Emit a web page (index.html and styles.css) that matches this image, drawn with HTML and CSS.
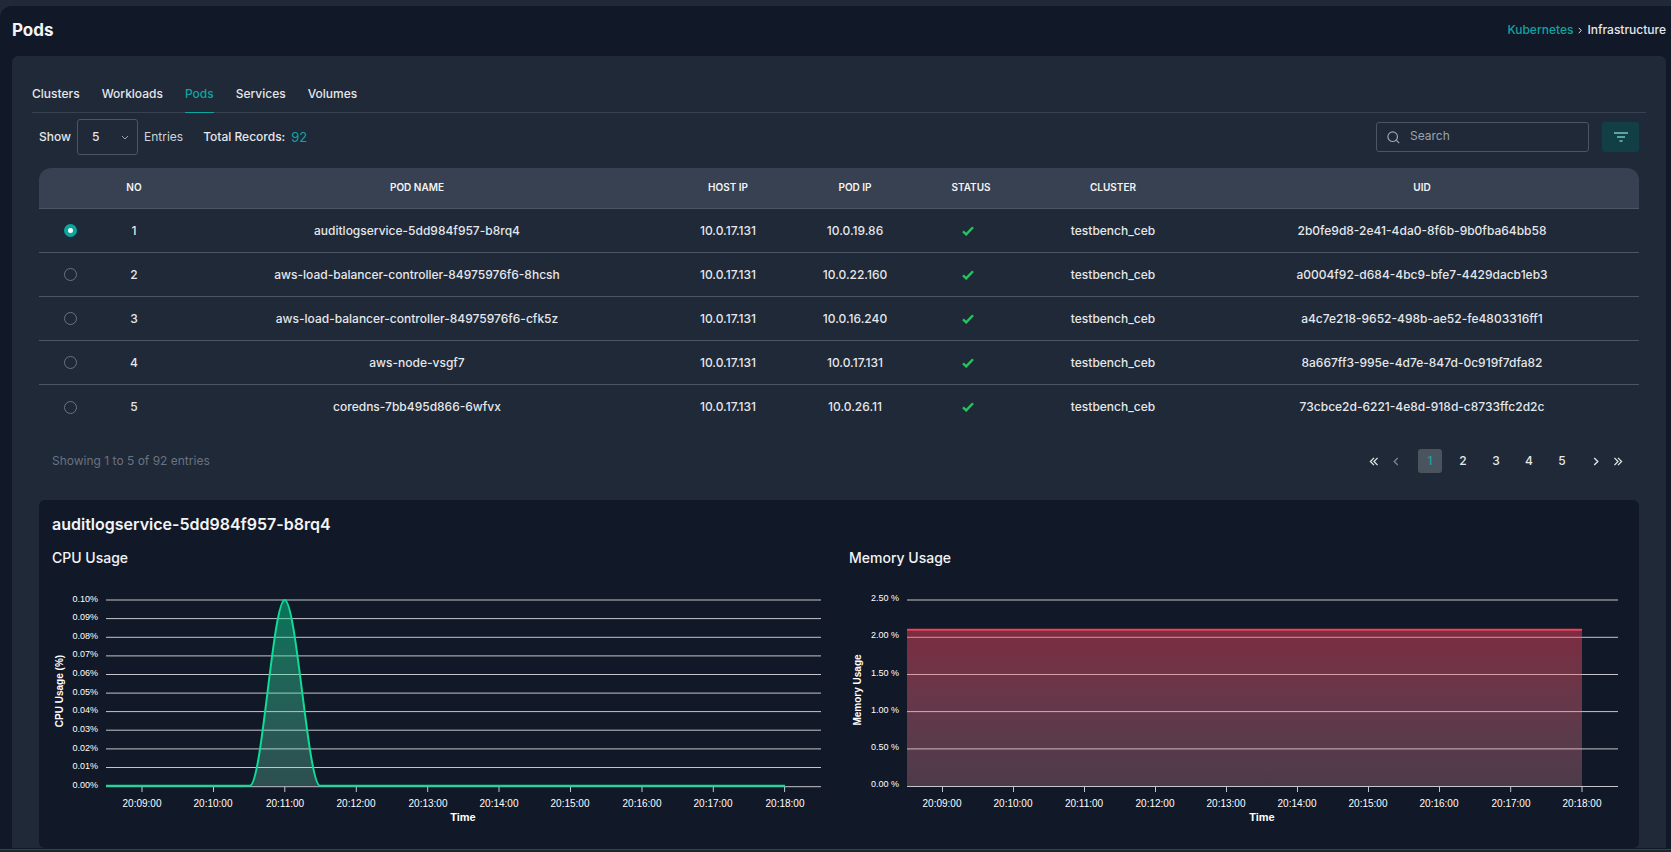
FILE: index.html
```html
<!DOCTYPE html>
<html lang="en">
<head>
    <meta charset="UTF-8">
    <meta name="viewport" content="width=device-width, initial-scale=1.0">
    <title>Pods</title>
    <link rel="stylesheet" href="styles.css">
</head>
<body>
<!-- shared icon shapes -->
<svg class="sprite" aria-hidden="true">
    <symbol id="check" viewBox="0 0 12 10"><path d="M1 5.4l3.2 3L11 1.2" fill="none" stroke="#22c55e" stroke-width="2.4"/></symbol>
    <symbol id="chevron" viewBox="0 0 6 10"><path d="M1 1l4 4-4 4" fill="none" stroke="currentColor" stroke-width="1.5"/></symbol>
    <symbol id="chevrons" viewBox="0 0 10 10"><path d="M1 1l4 4-4 4M5 1l4 4-4 4" fill="none" stroke="currentColor" stroke-width="1.4"/></symbol>
</svg>

<main class="page">
    <header class="page-header">
        <h1>Pods</h1>
        <nav class="breadcrumb" aria-label="Breadcrumb">
            <a href="#">Kubernetes</a>
            <svg width="4" height="7" viewBox="0 0 6 10"><use href="#chevron"/></svg>
            <span>Infrastructure</span>
        </nav>
    </header>

    <section class="panel">
        <nav class="tabs">
            <a href="#">Clusters</a>
            <a href="#">Workloads</a>
            <a href="#" class="active">Pods</a>
            <a href="#">Services</a>
            <a href="#">Volumes</a>
        </nav>

        <div class="panel-body">
            <div class="toolbar">
                <label for="page-size">Show</label>
                <div class="select-box">
                    <select id="page-size">
                        <option>5</option>
                        <option>10</option>
                        <option>25</option>
                    </select>
                    <svg width="8" height="5" viewBox="0 0 8 5"><path d="M1 1l3 3 3-3" fill="none" stroke="#9ca3af"/></svg>
                </div>
                <span class="entries">Entries</span>
                <span class="total">Total Records:</span>
                <span class="total-count">92</span>
                <div class="search">
                    <svg width="13" height="13" viewBox="0 0 13 13" fill="none" stroke="#9ca3af" stroke-width="1.2"><circle cx="5.7" cy="5.7" r="4.8"/><path d="M9.2 9.2l3 3"/></svg>
                    <input type="text" placeholder="Search" aria-label="Search">
                </div>
                <button class="filter-btn" aria-label="Filter">
                    <svg width="14" height="10" viewBox="0 0 14 10" stroke="#72c7c2" stroke-width="1.6"><path d="M0 1h14M3 5h8M5.5 9h3"/></svg>
                </button>
            </div>

            <table class="pods-table">
                <colgroup>
                    <col class="col-radio"><col class="col-no"><col class="col-name"><col class="col-host">
                    <col class="col-ip"><col class="col-status"><col class="col-cluster"><col class="col-uid">
                </colgroup>
                <thead>
                    <tr><th></th><th>NO</th><th>POD NAME</th><th>HOST IP</th><th>POD IP</th><th>STATUS</th><th>CLUSTER</th><th>UID</th></tr>
                </thead>
                <tbody>
                    <tr>
                        <td><input type="radio" name="pod" aria-label="Select pod 1" checked></td>
                        <td>1</td><td>auditlogservice-5dd984f957-b8rq4</td><td>10.0.17.131</td><td>10.0.19.86</td>
                        <td class="status"><svg width="12" height="10"><use href="#check"/></svg></td>
                        <td>testbench_ceb</td><td>2b0fe9d8-2e41-4da0-8f6b-9b0fba64bb58</td>
                    </tr>
                    <tr>
                        <td><input type="radio" name="pod" aria-label="Select pod 2"></td>
                        <td>2</td><td>aws-load-balancer-controller-84975976f6-8hcsh</td><td>10.0.17.131</td><td>10.0.22.160</td>
                        <td class="status"><svg width="12" height="10"><use href="#check"/></svg></td>
                        <td>testbench_ceb</td><td>a0004f92-d684-4bc9-bfe7-4429dacb1eb3</td>
                    </tr>
                    <tr>
                        <td><input type="radio" name="pod" aria-label="Select pod 3"></td>
                        <td>3</td><td>aws-load-balancer-controller-84975976f6-cfk5z</td><td>10.0.17.131</td><td>10.0.16.240</td>
                        <td class="status"><svg width="12" height="10"><use href="#check"/></svg></td>
                        <td>testbench_ceb</td><td>a4c7e218-9652-498b-ae52-fe4803316ff1</td>
                    </tr>
                    <tr>
                        <td><input type="radio" name="pod" aria-label="Select pod 4"></td>
                        <td>4</td><td>aws-node-vsgf7</td><td>10.0.17.131</td><td>10.0.17.131</td>
                        <td class="status"><svg width="12" height="10"><use href="#check"/></svg></td>
                        <td>testbench_ceb</td><td>8a667ff3-995e-4d7e-847d-0c919f7dfa82</td>
                    </tr>
                    <tr>
                        <td><input type="radio" name="pod" aria-label="Select pod 5"></td>
                        <td>5</td><td>coredns-7bb495d866-6wfvx</td><td>10.0.17.131</td><td>10.0.26.11</td>
                        <td class="status"><svg width="12" height="10"><use href="#check"/></svg></td>
                        <td>testbench_ceb</td><td>73cbce2d-6221-4e8d-918d-c8733ffc2d2c</td>
                    </tr>
                </tbody>
            </table>

            <div class="table-footer">
                <span>Showing 1 to 5 of 92 entries</span>
                <nav class="pagination" aria-label="Pagination">
                    <button class="arrow" aria-label="First page"><svg class="flip" width="10" height="9"><use href="#chevrons"/></svg></button>
                    <button class="arrow" aria-label="Previous page" disabled><svg class="flip" width="6" height="9"><use href="#chevron"/></svg></button>
                    <div class="page-numbers">
                        <button class="current">1</button>
                        <button>2</button>
                        <button>3</button>
                        <button>4</button>
                        <button>5</button>
                    </div>
                    <button class="arrow" aria-label="Next page"><svg width="6" height="9"><use href="#chevron"/></svg></button>
                    <button class="arrow" aria-label="Last page"><svg width="10" height="9"><use href="#chevrons"/></svg></button>
                </nav>
            </div>

            <section class="usage">
                <h2>auditlogservice-5dd984f957-b8rq4</h2>
                <div class="charts">
                    <div class="chart">
                        <h3>CPU Usage</h3>
                        <svg viewBox="0 0 777 260" role="img" aria-label="CPU usage over time">
                            <defs>
                                <linearGradient id="cpu-fill" x1="0" y1="0" x2="0" y2="1">
                                    <stop offset="0" stop-color="#00e396" stop-opacity="0.45"/>
                                    <stop offset="1" stop-color="#80f1cb" stop-opacity="0.25"/>
                                </linearGradient>
                            </defs>
                            <path class="grid" d="M54 21H769M54 39.6H769M54 58.3H769M54 76.9H769M54 95.5H769M54 114.1H769M54 132.6H769M54 151.2H769M54 169.9H769M54 188.5H769"/>
                            <path class="axis" d="M54 207.7H769M90 208v5M161.5 208v5M232.8 208v5M304.3 208v5M375.7 208v5M447 208v5M518.5 208v5M590 208v5M661.3 208v5M732.6 208v5"/>
                            <path fill="url(#cpu-fill)" d="M198 207C210 206 221 21 232.7 21S256 206 268 207z"/>
                            <path class="cpu-line" d="M54 206.8H198C210 206 221 21 232.7 21S256 206 268 206.8H733"/>
                            <g class="y-labels">
                                <text x="46" y="23">0.10%</text>
                                <text x="46" y="41">0.09%</text>
                                <text x="46" y="60">0.08%</text>
                                <text x="46" y="78">0.07%</text>
                                <text x="46" y="97">0.06%</text>
                                <text x="46" y="116">0.05%</text>
                                <text x="46" y="134">0.04%</text>
                                <text x="46" y="153">0.03%</text>
                                <text x="46" y="172">0.02%</text>
                                <text x="46" y="190">0.01%</text>
                                <text x="46" y="209">0.00%</text>
                            </g>
                            <g class="x-labels">
                                <text x="90" y="228">20:09:00</text>
                                <text x="161" y="228">20:10:00</text>
                                <text x="233" y="228">20:11:00</text>
                                <text x="304" y="228">20:12:00</text>
                                <text x="376" y="228">20:13:00</text>
                                <text x="447" y="228">20:14:00</text>
                                <text x="518" y="228">20:15:00</text>
                                <text x="590" y="228">20:16:00</text>
                                <text x="661" y="228">20:17:00</text>
                                <text x="733" y="228">20:18:00</text>
                            </g>
                            <text class="x-title" x="411" y="242">Time</text>
                            <text class="y-title" transform="translate(11 112) rotate(-90)">CPU Usage (%)</text>
                        </svg>
                    </div>
                    <div class="chart">
                        <h3>Memory Usage</h3>
                        <svg viewBox="0 0 777 260" role="img" aria-label="Memory usage over time">
                            <defs>
                                <linearGradient id="mem-fill" x1="0" y1="0" x2="0" y2="1">
                                    <stop offset="0" stop-color="#ff4560" stop-opacity="0.45"/>
                                    <stop offset="1" stop-color="#ffa2b0" stop-opacity="0.25"/>
                                </linearGradient>
                            </defs>
                            <path class="grid" d="M58 21H769M58 58.3H769M58 95.5H769M58 132.6H769M58 169.9H769"/>
                            <path class="axis" d="M58 207.5H769M93.5 208v5M164.5 208v5M235.5 208v5M306.5 208v5M377.5 208v5M448.5 208v5M519.5 208v5M590.5 208v5M661.7 208v5M733 208v5"/>
                            <path fill="url(#mem-fill)" d="M58 50.7H733V207H58z"/>
                            <path class="mem-line" d="M58 50.7H733"/>
                            <g class="y-labels">
                                <text x="50" y="22">2.50 %</text>
                                <text x="50" y="59">2.00 %</text>
                                <text x="50" y="97">1.50 %</text>
                                <text x="50" y="134">1.00 %</text>
                                <text x="50" y="171">0.50 %</text>
                                <text x="50" y="208">0.00 %</text>
                            </g>
                            <g class="x-labels">
                                <text x="93" y="228">20:09:00</text>
                                <text x="164" y="228">20:10:00</text>
                                <text x="235" y="228">20:11:00</text>
                                <text x="306" y="228">20:12:00</text>
                                <text x="377" y="228">20:13:00</text>
                                <text x="448" y="228">20:14:00</text>
                                <text x="519" y="228">20:15:00</text>
                                <text x="590" y="228">20:16:00</text>
                                <text x="662" y="228">20:17:00</text>
                                <text x="733" y="228">20:18:00</text>
                            </g>
                            <text class="x-title" x="413" y="242">Time</text>
                            <text class="y-title" transform="translate(12 111) rotate(-90)">Memory Usage</text>
                        </svg>
                    </div>
                </div>
            </section>
        </div>
    </section>
</main>
<footer class="bottom-bar"></footer>
</body>
</html>
```
FILE: styles.css
```css
* {
    box-sizing: border-box;
}

body {
    margin: 0;
    height: 100vh;
    padding-top: 6px;
    display: flex;
    flex-direction: column;
    background: #1f2937;
    color: #e5e7eb;
    font-family: Inter, "Open Sans", sans-serif;
    font-size: 13px;
    line-height: 20px;
}

h1, h2, h3 {
    margin: 0;
    color: #f3f4f6;
}

a {
    color: inherit;
    text-decoration: none;
}

button, input, select {
    font: inherit;
    color: inherit;
}

button {
    padding: 0;
    border: none;
    background: none;
    cursor: pointer;
}

.sprite {
    position: absolute;
    width: 0;
    height: 0;
}

.page {
    flex: 1;
    min-height: 0;
    overflow: auto;
    scrollbar-width: none;
    padding: 0 5px 0 12px;
    background: #111827;
    border-top-left-radius: 12px;
}

.page-header {
    display: flex;
    justify-content: space-between;
    align-items: center;
    height: 50px;
    padding-bottom: 2px;
}

h1 {
    font-size: 17px;
    font-weight: 700;
}

.breadcrumb {
    display: flex;
    align-items: center;
    gap: 5px;
    font-size: 12px;
    font-weight: 500;
}

.breadcrumb a, .total-count {
    color: #0ea5a0;
}

.panel {
    padding: 20px 20px 0;
    background: #1f2937;
    border-radius: 6px 6px 0 0;
}

/* tabs */
.tabs {
    display: flex;
    gap: 22px;
    border-bottom: 1px solid #374151;
    font-size: 12px;
    font-weight: 500;
}

.tabs a {
    padding: 8px 0;
    margin-bottom: -1px;
    border-bottom: 1px solid transparent;
}

.tabs .active {
    color: #0ea5a0;
    border-bottom-color: #0ea5a0;
}

.panel-body {
    padding: 6px 7px 0;
}

/* toolbar */
.toolbar {
    display: flex;
    align-items: center;
    height: 36px;
    font-size: 12px;
    font-weight: 500;
}

.select-box {
    position: relative;
    margin: 0 6px;
}

.select-box select {
    width: 61px;
    height: 36px;
    padding: 0 14px;
    appearance: none;
    background: transparent;
    border: 1px solid #4b5563;
    border-radius: 3px;
}

.select-box option {
    background: #1f2937;
}

.select-box svg {
    position: absolute;
    right: 9px;
    top: 16px;
    pointer-events: none;
}

.entries {
    color: #d1d5db;
    font-weight: 400;
}

.total {
    margin-left: 20px;
}

.total-count {
    margin-left: 6px;
    font-size: 13px;
    font-weight: 400;
}

.search {
    display: flex;
    align-items: center;
    gap: 10px;
    width: 213px;
    height: 30px;
    margin-left: auto;
    padding: 0 10px;
    border: 1px solid #4b5563;
    border-radius: 3px;
}

.search svg {
    flex: none;
}

.search input {
    width: 100%;
    padding: 0 0 2px;
    border: none;
    outline: none;
    background: none;
    font-weight: 400;
}

.search input::placeholder {
    color: #9ca3af;
    opacity: 1;
}

.filter-btn {
    display: flex;
    align-items: center;
    justify-content: center;
    width: 37px;
    height: 30px;
    margin-left: 13px;
    background: #113f45;
    border-radius: 3px;
}

/* table */
.pods-table {
    width: 100%;
    margin-top: 13px;
    table-layout: fixed;
    border-collapse: separate;
    border-spacing: 0;
    text-align: center;
    font-size: 12px;
    font-weight: 500;
}

.col-radio { width: 62px; }
.col-no { width: 66px; }
.col-name { width: 500px; }
.col-host { width: 122px; }
.col-ip { width: 132px; }
.col-status { width: 100px; }
.col-cluster { width: 184px; }
.col-uid { width: 434px; }

.pods-table th {
    height: 41px;
    padding: 0 0 2px;
    background: #374151;
    border-bottom: 1px solid #4b5563;
    color: #f3f4f6;
    font-size: 10px;
    font-weight: 600;
}

.pods-table th:first-child {
    border-top-left-radius: 12px;
}

.pods-table th:last-child {
    border-top-right-radius: 12px;
}

.pods-table td {
    height: 44px;
    padding: 0;
    border-bottom: 1px solid #4b5563;
}

.pods-table tr:last-child td {
    border-bottom: none;
}

.pods-table input {
    display: block;
    width: 13px;
    height: 13px;
    margin: 0 auto;
    appearance: none;
    border: 1px solid #6b7280;
    border-radius: 50%;
}

.pods-table input:checked {
    border: 4px solid #0ea5a0;
    background: #ffffff;
}

.pods-table .status {
    padding-right: 6px;
}

.status svg {
    display: block;
    margin: 0 auto;
}

/* footer of the table */
.table-footer {
    display: flex;
    justify-content: space-between;
    align-items: center;
    padding: 20px 16px 27px 13px;
    color: #6b7280;
    font-size: 12px;
}

.pagination {
    display: flex;
    align-items: center;
    gap: 14px;
    color: #e5e7eb;
    font-weight: 500;
}

.arrow {
    display: flex;
}

.arrow:disabled {
    color: #7b8391;
}

.flip {
    transform: scaleX(-1);
}

.page-numbers {
    display: flex;
    gap: 9px;
    margin: 0 5px;
}

.page-numbers button {
    width: 24px;
    height: 24px;
    border-radius: 3px;
}

.page-numbers .current {
    background: #4a545e;
    color: #0ea5a0;
}

/* charts */
.usage {
    padding: 12px 13px 9px;
    background: #111827;
    border-radius: 6px;
}

h2 {
    font-size: 16px;
    font-weight: 600;
    line-height: 24px;
}

.charts {
    display: grid;
    grid-template-columns: 1fr 1fr;
    gap: 20px;
    margin-top: 12px;
}

h3 {
    font-size: 14px;
    font-weight: 500;
    line-height: 20px;
}

.chart svg {
    display: block;
    width: 100%;
    margin-top: 11px;
    font-family: "Liberation Sans", Arial, sans-serif;
    fill: #ffffff;
}

.chart .grid, .chart .axis {
    fill: none;
    stroke: #c4c6ca;
}

.chart .cpu-line {
    fill: none;
    stroke: #0fdc96;
    stroke-width: 2;
}

.chart .mem-line {
    stroke: #f23f59;
    stroke-width: 2;
}

.y-labels {
    font-size: 9px;
    text-anchor: end;
}

.x-labels {
    font-size: 10px;
    text-anchor: middle;
}

.x-title {
    font-size: 11px;
    font-weight: 700;
    text-anchor: middle;
}

.y-title {
    font-size: 10px;
    font-weight: 700;
    text-anchor: middle;
}

.bottom-bar {
    height: 3px;
    background: #18282d;
    border-top: 1px solid #34464b;
}
```
